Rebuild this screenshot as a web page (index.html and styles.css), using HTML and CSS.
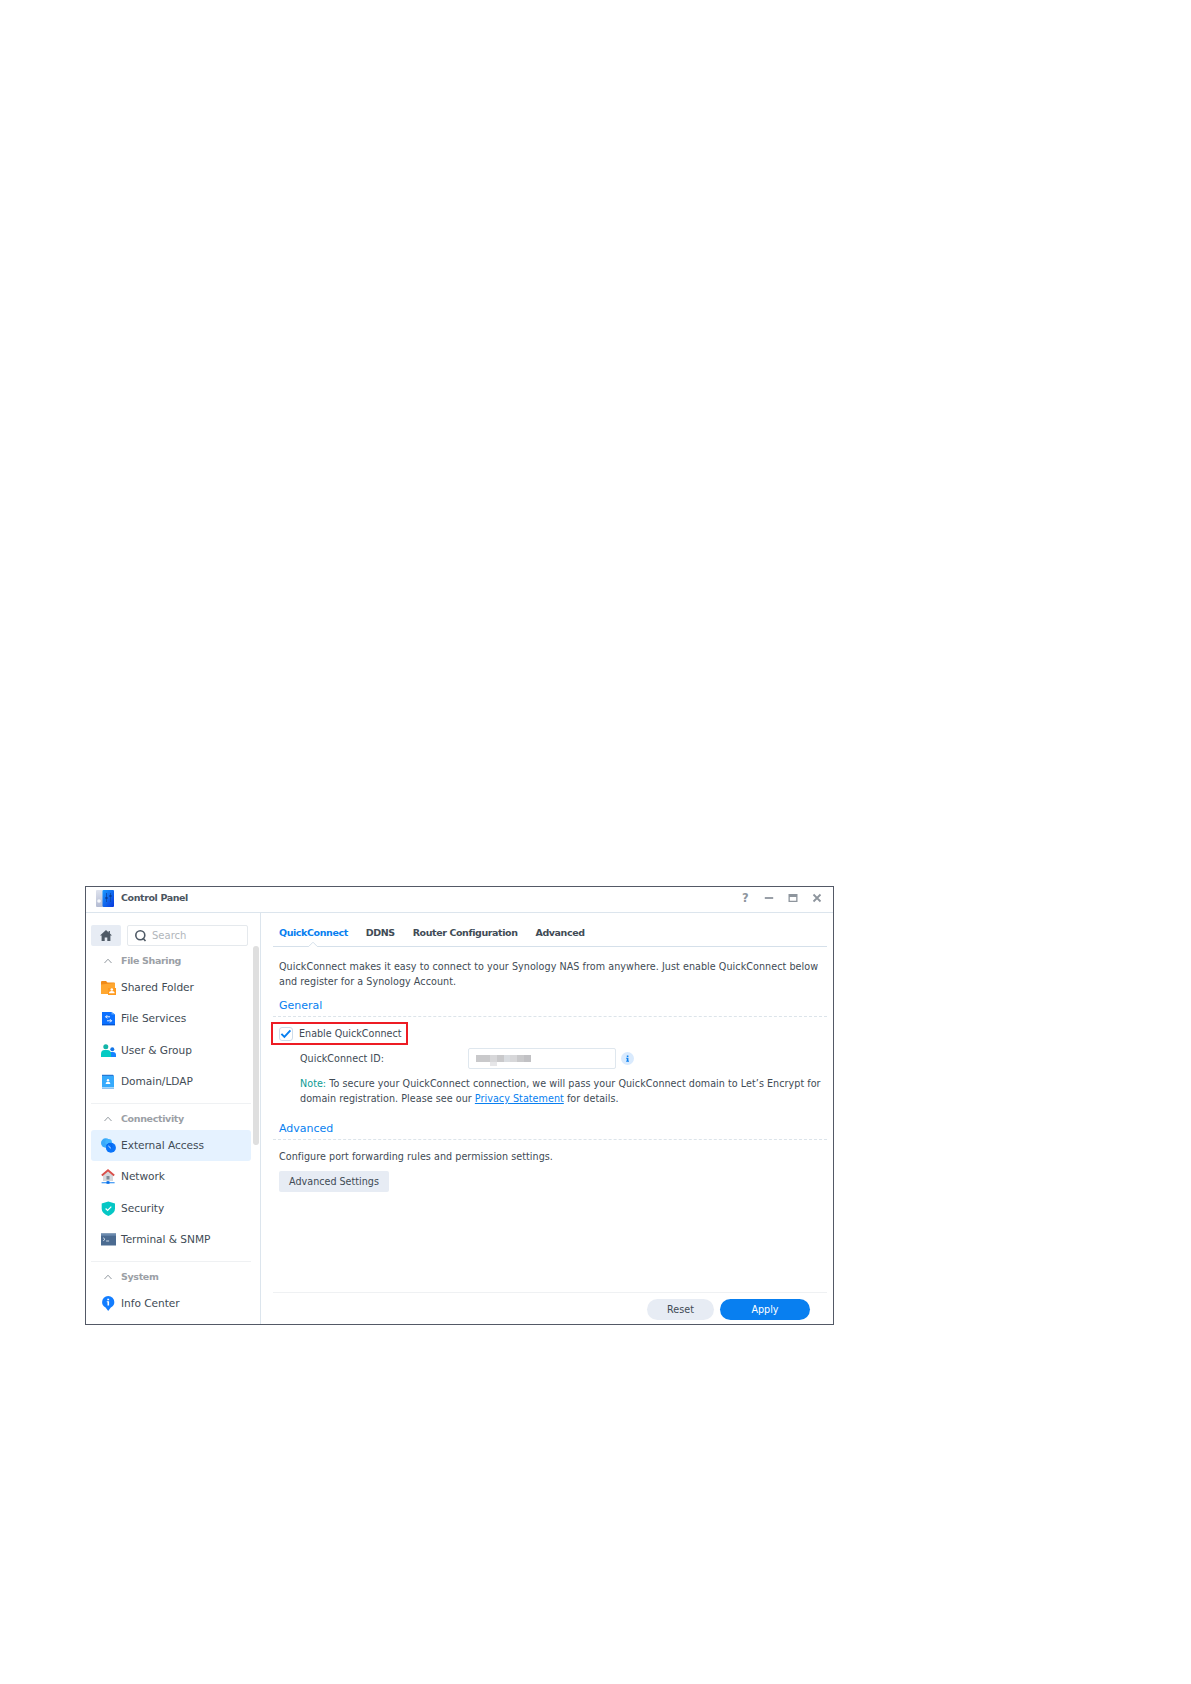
FILE: index.html
```html
<!DOCTYPE html>
<html lang="en">
<head>
    <meta charset="UTF-8">
    <meta name="viewport" content="width=device-width, initial-scale=1.0">
    <title>Control Panel</title>
    <link rel="stylesheet" href="styles.css">
</head>
<body>
    <div class="window">
        <header class="titlebar">
            <svg class="app-icon" width="18" height="17" viewBox="0 0 18 17">
                <defs>
                    <linearGradient id="panelBlue" x1="0" y1="0" x2="1" y2="1">
                        <stop offset="0" stop-color="#199bff"/>
                        <stop offset="1" stop-color="#0836dc"/>
                    </linearGradient>
                    <linearGradient id="panelGray" x1="0" y1="0" x2="0" y2="1">
                        <stop offset="0" stop-color="#dfe3ee"/>
                        <stop offset="1" stop-color="#b3bbd2"/>
                    </linearGradient>
                </defs>
                <rect width="7" height="17" rx="1" fill="url(#panelGray)"/>
                <rect x="6.5" width="11.5" height="17" rx="1" fill="url(#panelBlue)"/>
                <circle cx="3" cy="11" r="1.8" fill="#f5f7fb"/>
                <path d="M10.5 3v9M14.5 3v9" stroke="#0b4bb0" stroke-width=".9"/>
                <path d="M9.3 8h2.4M13.3 6h2.4" stroke="#0a3c8c" stroke-width="1.6"/>
            </svg>
            <h1>Control Panel</h1>
            <div class="controls">
                <span class="help">?</span>
                <svg width="10" height="10" viewBox="0 0 10 10"><path d="M.8 5h8.4" stroke="#8e959d" stroke-width="1.8"/></svg>
                <svg width="10" height="10" viewBox="0 0 10 10"><path d="M.5 1h9v8h-9zM1.8 4v3.8h6.4V4z" fill="#8e959d" fill-rule="evenodd"/></svg>
                <svg width="10" height="10" viewBox="0 0 10 10"><path d="M1.5 1.5l7 7M8.5 1.5l-7 7" stroke="#8e959d" stroke-width="1.8"/></svg>
            </div>
        </header>

        <div class="body">
            <nav class="sidebar">
                <div class="tools">
                    <button class="home" aria-label="Home">
                        <svg width="12" height="11" viewBox="0 0 12 11"><path d="M6 0l2.6 2.4V1h1.3v2.6L12 5.6h-1.6V11H7.3V7.6H4.7V11H1.6V5.6H0z" fill="#4f5a66"/></svg>
                    </button>
                    <div class="search">
                        <svg width="12" height="12" viewBox="0 0 12 12" fill="none" stroke="#4f5a66" stroke-width="1.6"><circle cx="5.3" cy="5.3" r="4.5"/><path d="M7.8 8l2.7 3"/></svg>
                        <span>Search</span>
                    </div>
                </div>

                <div class="group">
                    <h2><svg class="chevron" viewBox="0 0 8 6"><path d="M.5 5L4 1.2 7.5 5"/></svg>File Sharing</h2>
                    <ul>
                        <li>
                            <svg class="icon" viewBox="0 0 15 15"><path d="M0 2q0-1 1-1h4l1.5 1.5H13q1 0 1 1V13q0 1-1 1H1q-1 0-1-1z" fill="#f08b18"/><path d="M0 4.4L14 3v10q0 1-1 1H1q-1 0-1-1z" fill="#ffa730"/><path d="M7 8h8v7H7z" fill="#ff9a1e"/><circle cx="10.8" cy="9.5" r="1.3" fill="#fff"/><path d="M8 13.3q0-2.2 2.8-2.2t2.8 2.2z" fill="#fff"/></svg>
                            Shared Folder
                        </li>
                        <li>
                            <svg class="icon" viewBox="0 0 15 15"><path d="M1 1h9.5L14 3.5V14H1z" fill="#0b70ff"/><path d="M1 13h13v1.4H1z" fill="#0757d2"/><path d="M10.5 1L14 3.5h-3.5z" fill="#58a6ff"/><path d="M9 5.8H4.6M6.2 4.2L4.6 5.8l1.6 1.6M6 9.8h4.6M9 8.2l1.6 1.6L9 11.4" fill="none" stroke="#fff" stroke-width=".9"/></svg>
                            File Services
                        </li>
                        <li>
                            <svg class="icon" viewBox="0 0 15 15"><circle cx="4.8" cy="3.7" r="2.5" fill="#13b4a8"/><circle cx="11.3" cy="6.3" r="2" fill="#1275e8"/><path d="M7 14v-2q0-3 3-3h2q3 0 3 3v2z" fill="#1683ff"/><path d="M0 14v-3q0-4 3.6-4h2.6Q10 7 10 11v3z" fill="#05cbc4"/></svg>
                            User &amp; Group
                        </li>
                        <li>
                            <svg class="icon" viewBox="0 0 15 15"><path d="M1 .8h11L13 2v12.7H1z" fill="#2578d5"/><path d="M1 2h12v12H1z" fill="#36aafc"/><path d="M1 13h12v1.7H1z" fill="#a5d6fa"/><circle cx="7" cy="6.3" r="1.2" fill="#fff"/><path d="M4.6 10q0-2.3 2.4-2.3T9.4 10z" fill="#fff"/></svg>
                            Domain/LDAP
                        </li>
                    </ul>
                </div>

                <div class="group">
                    <h2><svg class="chevron" viewBox="0 0 8 6"><path d="M.5 5L4 1.2 7.5 5"/></svg>Connectivity</h2>
                    <ul>
                        <li class="active">
                            <svg class="icon" viewBox="0 0 15 15"><circle cx="4.7" cy="5" r="4.7" fill="#39a9fa"/><circle cx="7.6" cy="4.3" r="3.3" fill="#43b5ff"/><circle cx="9.9" cy="9.8" r="5" fill="#0974fa"/><path d="M5.2 7.5q2.2-3 4.6-1.4 2.4 1.8.2 4.2" fill="none" stroke="#0560e6" stroke-width=".9"/><path d="M7.4 8l2.4 2.2" stroke="#dff1ff" stroke-width="1"/></svg>
                            External Access
                        </li>
                        <li>
                            <svg class="icon" viewBox="0 0 15 15"><path d="M2 6l5-4.5L12 6v6H2z" fill="#d5d8dc"/><path d="M5.5 7h3v3.5h-3z" fill="#828b96"/><path d="M.8 6.5L7 1.2l6.2 5.3" fill="none" stroke="#d94f4a" stroke-width="1.8"/><path d="M.6 13.7h13M7 12v2" stroke="#1683f4" stroke-width="1.1"/><path d="M5.5 12.3h3v2.5h-3z" fill="#086ee8"/></svg>
                            Network
                        </li>
                        <li>
                            <svg class="icon" viewBox="0 0 15 15"><path d="M7.3.4L14 2.6v5.2q0 4.5-6.7 7.2Q.7 12.3.7 7.8V2.6z" fill="#05c7c5"/><path d="M4.6 7.5l2 2 3.7-3.8" fill="none" stroke="#fff" stroke-width="1.2"/></svg>
                            Security
                        </li>
                        <li>
                            <svg class="icon" viewBox="0 0 15 15"><path d="M0 1.5h15v12H0z" fill="#4b6b91"/><path d="M0 1.5h15v2.2H0z" fill="#6b8aae"/><path d="M2.2 5.8L4 7.3 2.2 8.8M5.1 9h3" fill="none" stroke="#dce6f1" stroke-width=".9"/></svg>
                            Terminal &amp; SNMP
                        </li>
                    </ul>
                </div>

                <div class="group">
                    <h2><svg class="chevron" viewBox="0 0 8 6"><path d="M.5 5L4 1.2 7.5 5"/></svg>System</h2>
                    <ul>
                        <li>
                            <svg class="icon" viewBox="0 0 15 15"><path d="M7.2 0a6.1 6.1 0 0 1 6.1 6.2q0 3.6-3.5 5.2L7.2 15l-2.6-3.6Q1.1 9.8 1.1 6.2A6.1 6.1 0 0 1 7.2 0z" fill="#127dff"/><path d="M6.3 2.8h1.8v1.5H6.3zM5.8 5.2h2.3v4.2H6.5V6.3h-.7z" fill="#fff"/></svg>
                            Info Center
                        </li>
                    </ul>
                </div>
                <div class="scrollbar"></div>
            </nav>

            <main class="content">
                <div class="tabs">
                    <a class="tab selected">QuickConnect
                        <svg class="notch" width="10" height="6" viewBox="0 0 10 6"><path d="M0 6l5-5 5 5z" fill="#fff"/><path d="M0 5.5h.7L5 1.2l4.3 4.3h.7" fill="none" stroke="#d5e0ea"/></svg>
                    </a>
                    <a class="tab">DDNS</a>
                    <a class="tab">Router Configuration</a>
                    <a class="tab">Advanced</a>
                </div>

                <p class="intro">QuickConnect makes it easy to connect to your Synology NAS from anywhere. Just enable QuickConnect below<br>and register for a Synology Account.</p>

                <h3 class="general">General</h3>
                <label class="enable">
                    <span class="checkbox"><svg width="12" height="12" viewBox="0 0 12 12"><path d="M1.4 5.8l3 3.1 6-6.5" fill="none" stroke="#087ff0" stroke-width="1.9"/></svg></span>
                    <span>Enable QuickConnect</span>
                </label>
                <div class="field">
                    <span class="field-label">QuickConnect ID:</span>
                    <div class="input">
                        <div class="mask">
                            <i></i><i></i><i></i><i></i><i></i><i></i><i></i><i></i>
                        </div>
                    </div>
                    <svg class="info" width="13" height="13" viewBox="0 0 13 13"><circle cx="6.5" cy="6.5" r="6.5" fill="#d9eafd"/><path d="M5.8 3.6h1.6V5H5.8zM5.2 5.7h2.2v3h.6v1H5.2v-1h.6v-2h-.6z" fill="#087ff0"/></svg>
                </div>
                <p class="note"><b>Note:</b> To secure your QuickConnect connection, we will pass your QuickConnect domain to Let’s Encrypt for<br>domain registration. Please see our <a>Privacy Statement</a> for details.</p>

                <h3 class="advanced">Advanced</h3>
                <p class="configure">Configure port forwarding rules and permission settings.</p>
                <button class="settings">Advanced Settings</button>

                <footer>
                    <button class="reset">Reset</button>
                    <button class="apply">Apply</button>
                </footer>
            </main>
        </div>
    </div>
</body>
</html>
```

FILE: styles.css
```css
* {
    box-sizing: border-box;
}
body {
    margin: 0;
    min-height: 1684px;
    padding: 886px 0 0 85px;
    background: #fff;
    color: #414b55;
    font: 9.6px/15px "DejaVu Sans", Verdana, sans-serif;
}
h1, h2, h3, p, ul {
    margin: 0;
    padding: 0;
}
button {
    border: 0;
    padding: 0;
    color: inherit;
    font: inherit;
}
svg {
    display: block;
    flex: none;
}
.window {
    display: flex;
    flex-direction: column;
    width: 749px;
    height: 439px;
    border: 1px solid #535966;
    white-space: nowrap;
}
.titlebar {
    display: flex;
    align-items: center;
    height: 26px;
    padding: 0 11px 3px 10px;
    border-bottom: 1px solid #dce5ed;
}
.titlebar h1 {
    margin: -1px 0 0 7px;
    color: #4b5560;
    font-size: 9.5px;
    line-height: 15px;
    letter-spacing: -0.4px;
}
.controls {
    display: flex;
    align-items: center;
    gap: 14px;
    margin-left: auto;
}
.help {
    width: 8px;
    color: #8e959d;
    font-size: 11.5px;
    font-weight: bold;
}
.body {
    display: flex;
    flex: 1;
    min-height: 0;
}
.sidebar {
    position: relative;
    width: 175px;
    padding: 12px 9px 0 5px;
    border-right: 1px solid #dce5ed;
}
.tools {
    display: flex;
    gap: 6px;
    width: 157px;
}
.home {
    display: flex;
    align-items: center;
    justify-content: center;
    width: 30px;
    height: 21px;
    border-radius: 2px;
    background: #e7ecf4;
}
.search {
    display: flex;
    align-items: center;
    flex: 1;
    gap: 5px;
    height: 21px;
    padding-left: 7px;
    border: 1px solid #e5e9ed;
    border-radius: 2px;
    color: #b1b6bb;
    font-size: 10px;
}
.group {
    padding-bottom: 6px;
}
.group + .group {
    border-top: 1px solid #eff1f3;
}
.group h2 {
    display: flex;
    align-items: center;
    height: 26px;
    padding: 3px 0 0 13px;
    color: #9ba0a6;
    font-size: 9.5px;
    letter-spacing: -0.35px;
}
.group ul {
    list-style: none;
}
.chevron {
    width: 8px;
    height: 6px;
    margin-right: 9px;
    fill: none;
    stroke: #9299a0;
}
.group li {
    display: flex;
    align-items: center;
    height: 31.25px;
    padding-left: 10px;
    border-radius: 3px;
    font-size: 10.6px;
    letter-spacing: -0.04px;
}
.group li.active {
    background: #e5f2ff;
}
.icon {
    width: 15px;
    height: 15px;
    margin-right: 5px;
}
.scrollbar {
    position: absolute;
    top: 33px;
    right: 1px;
    width: 6px;
    height: 199px;
    border-radius: 3px;
    background: #dfdfdf;
}
.content {
    display: flex;
    flex: 1;
    flex-direction: column;
    align-items: flex-start;
    padding: 7px 6px 0 12px;
}
.tabs {
    display: flex;
    align-self: stretch;
    gap: 18px;
    height: 27px;
    padding: 5px 0 0 6px;
    border-bottom: 1px solid #d5e0ea;
    font-size: 9.5px;
    font-weight: bold;
    letter-spacing: -0.41px;
}
.tab {
    position: relative;
}
.tab.selected {
    color: #087ff0;
}
.notch {
    position: absolute;
    left: 29px;
    bottom: -1px;
}
.intro {
    margin: 12px 0 0 6px;
    letter-spacing: 0.053px;
}
h3 {
    align-self: stretch;
    height: 20px;
    padding-left: 6px;
    border-bottom: 1px dashed #dce4ea;
    color: #087ff0;
    font-size: 11px;
    font-weight: normal;
    line-height: 17px;
}
.general {
    margin-top: 8px;
}
.enable {
    display: flex;
    align-items: center;
    width: 137px;
    height: 23px;
    margin: 5px 0 0 -2px;
    padding-left: 6px;
    border: 2px solid #ed1c24;
}
.checkbox {
    width: 14px;
    height: 14px;
    margin-right: 6px;
    border: 1px solid #cddceb;
    border-radius: 3px;
}
.field {
    display: flex;
    align-items: center;
    height: 21px;
    margin: 3px 0 0 27px;
}
.field-label {
    width: 168px;
    letter-spacing: 0.04px;
}
.input {
    width: 148px;
    height: 21px;
    padding: 6px 0 0 7px;
    border: 1px solid #dfe7ee;
    border-radius: 2px;
}
/* pixelated ID value */
.mask {
    display: flex;
    width: 55px;
    height: 7px;
}
.mask i {
    flex: 1;
    background: #c9c9cb;
}
.mask i:nth-child(3n) {
    background: #d7d7d9;
}
.mask i:nth-child(3) {
    box-shadow: 0 4px #e6e6e8;
}
.mask i:nth-child(5) {
    background: #d9dce0;
}
.mask i:nth-child(8) {
    background: #c1c1c4;
}
.info {
    margin-left: 5px;
}
.note {
    margin: 7px 0 0 27px;
    letter-spacing: 0.04px;
}
.note b {
    color: #0b9b94;
    font-weight: normal;
}
.note a {
    color: #087ff0;
    text-decoration: underline;
}
.advanced {
    margin-top: 14px;
}
.configure {
    margin: 9px 0 0 6px;
    letter-spacing: 0.045px;
}
.settings {
    width: 110px;
    height: 21px;
    margin: 7px 0 0 6px;
    border-radius: 2px;
    background: #e7ecf4;
}
footer {
    display: flex;
    align-self: stretch;
    justify-content: flex-end;
    gap: 6px;
    height: 32px;
    margin-top: auto;
    padding: 6px 17px 0 0;
    border-top: 1px solid #eff1f3;
}
footer button {
    height: 21px;
    border-radius: 11px;
}
.reset {
    width: 67px;
    background: #e7ecf4;
}
.apply {
    width: 90px;
    background: #087ff0;
    color: #fff;
}
```
